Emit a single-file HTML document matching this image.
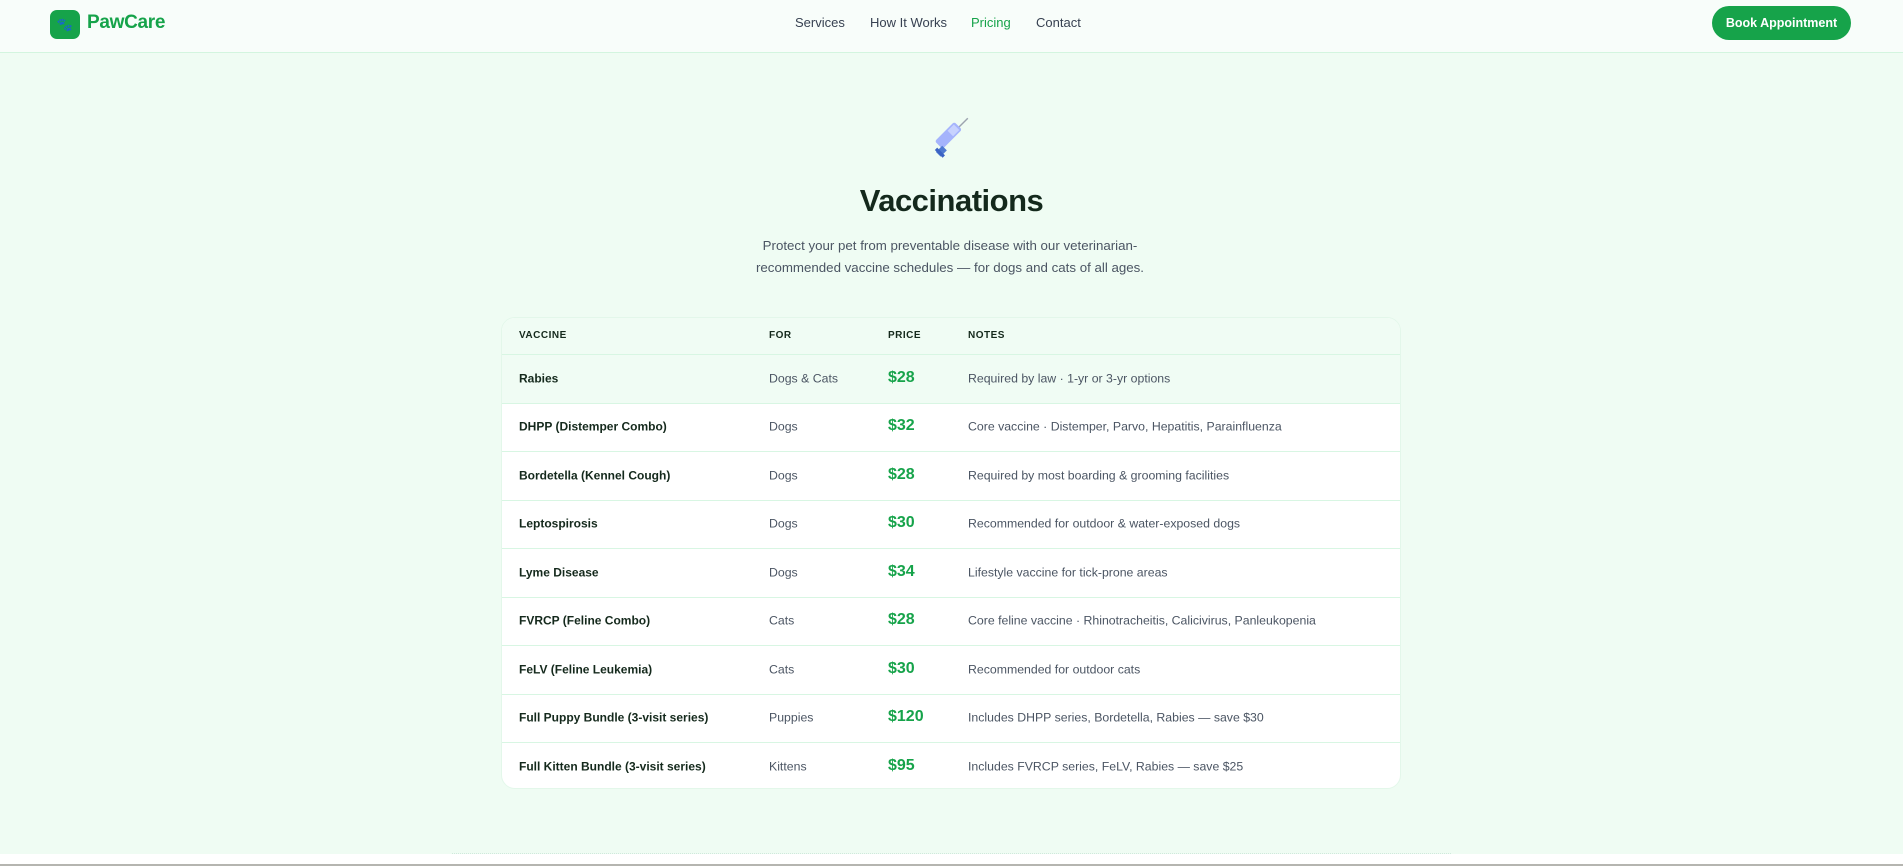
<!DOCTYPE html>
<html><head><meta charset="utf-8"><style>
*{margin:0;padding:0;box-sizing:border-box}
html,body{width:1903px;height:866px;overflow:hidden}
body{background:#fff;font-family:"Liberation Sans",sans-serif;color:#1f2937;position:relative}
.main{position:absolute;left:0;top:0;width:1903px;height:854px;background:#effcf3}
nav{position:absolute;left:0;top:0;width:1903px;height:53px;background:#f8fdfa;border-bottom:1.5px solid #d3f5df}
.logo{position:absolute;left:50px;top:10px;width:30px;height:29px;border-radius:7px;background:#16a34a;color:#374151;font-size:13px;text-align:center;line-height:29px}
.brand{position:absolute;left:87px;top:12px;font-size:19px;font-weight:bold;color:#16a34a;letter-spacing:-0.3px}
.links a{position:absolute;top:15px;font-size:13px;color:#374151;text-decoration:none}
.btn{position:absolute;left:1712px;top:6px;width:139px;height:34px;border-radius:17px;background:#16a34a;color:#fff;font-size:12.5px;font-weight:bold;text-align:center;line-height:34px}
.emoji{position:absolute;left:926px;top:116px;width:44px;height:44px}
h1{position:absolute;left:0;width:1903px;top:183px;text-align:center;font-size:31px;font-weight:bold;color:#14291c;letter-spacing:-0.5px}
.sub{position:absolute;left:740px;width:420px;top:235px;text-align:center;font-size:13.3px;line-height:22px;color:#4b5563}
.tbl{position:absolute;left:501px;top:317px;width:900px;height:472px;background:#fff;border-radius:14px;overflow:hidden;border:1px solid #e3f7ea}
.row{position:absolute;left:0;width:900px;height:48.5px;border-top:1.5px solid #d8f6e3}
.row span{position:absolute;top:50%;transform:translateY(-55%);white-space:nowrap}
.c1{left:17px;font-size:12px;font-weight:bold;color:#14291c}
.c2{left:267px;font-size:12.3px;color:#4b5563}
.c3{left:386px;font-size:16px;font-weight:bold;color:#16a34a}
.c4{left:466px;font-size:12.3px;color:#4b5563}
.hd{top:0;height:36px;border-top:none;background:#f0fcf4}
.hd span{font-size:10px;font-weight:bold;color:#14291c;letter-spacing:0.5px}
.footline{position:absolute;left:0;top:864px;width:1903px;height:2px;background:#b5b5b0}
.dots{position:absolute;left:452px;top:853px;width:999px;border-top:1px dotted #cfe9dc}
</style></head><body>
<div class="main">
<nav>
<div class="logo">🐾</div>
<div class="brand">PawCare</div>
<div class="links">
<a style="left:795px">Services</a>
<a style="left:870px">How It Works</a>
<a style="left:971px;color:#16a34a">Pricing</a>
<a style="left:1036px">Contact</a>
</div>
<div class="btn">Book Appointment</div>
</nav>
<svg class="emoji" viewBox="0 0 40 40">
<line x1="27" y1="13" x2="38" y2="2" stroke="#9ca3af" stroke-width="1.3"/>
<rect x="15" y="5" width="10" height="25" rx="2" fill="#a5b4fc" transform="rotate(45 20 18)"/>
<rect x="16.5" y="7" width="7" height="8" fill="#c7d2fe" transform="rotate(45 20 18)"/>
<rect x="11" y="28" width="6" height="8" fill="#4f7ad1" transform="rotate(45 14 32)"/>
<rect x="8" y="32" width="10" height="3" fill="#3b63c4" transform="rotate(45 13 33)"/>
</svg>
<h1>Vaccinations</h1>
<div class="sub">Protect your pet from preventable disease with our veterinarian-recommended vaccine schedules — for dogs and cats of all ages.</div>
<div class="tbl">
<div class="row hd"><span class="c1">VACCINE</span><span class="c2">FOR</span><span class="c3">PRICE</span><span class="c4">NOTES</span></div>
<div class="row" style="top:36px;background:#f0fcf4"><span class="c1">Rabies</span><span class="c2">Dogs &amp; Cats</span><span class="c3">$28</span><span class="c4">Required by law · 1-yr or 3-yr options</span></div>
<div class="row" style="top:84.5px"><span class="c1">DHPP (Distemper Combo)</span><span class="c2">Dogs</span><span class="c3">$32</span><span class="c4">Core vaccine · Distemper, Parvo, Hepatitis, Parainfluenza</span></div>
<div class="row" style="top:133px"><span class="c1">Bordetella (Kennel Cough)</span><span class="c2">Dogs</span><span class="c3">$28</span><span class="c4">Required by most boarding &amp; grooming facilities</span></div>
<div class="row" style="top:181.5px"><span class="c1">Leptospirosis</span><span class="c2">Dogs</span><span class="c3">$30</span><span class="c4">Recommended for outdoor &amp; water-exposed dogs</span></div>
<div class="row" style="top:230px"><span class="c1">Lyme Disease</span><span class="c2">Dogs</span><span class="c3">$34</span><span class="c4">Lifestyle vaccine for tick-prone areas</span></div>
<div class="row" style="top:278.5px"><span class="c1">FVRCP (Feline Combo)</span><span class="c2">Cats</span><span class="c3">$28</span><span class="c4">Core feline vaccine · Rhinotracheitis, Calicivirus, Panleukopenia</span></div>
<div class="row" style="top:327px"><span class="c1">FeLV (Feline Leukemia)</span><span class="c2">Cats</span><span class="c3">$30</span><span class="c4">Recommended for outdoor cats</span></div>
<div class="row" style="top:375.5px"><span class="c1">Full Puppy Bundle (3-visit series)</span><span class="c2">Puppies</span><span class="c3">$120</span><span class="c4">Includes DHPP series, Bordetella, Rabies — save $30</span></div>
<div class="row" style="top:424px"><span class="c1">Full Kitten Bundle (3-visit series)</span><span class="c2">Kittens</span><span class="c3">$95</span><span class="c4">Includes FVRCP series, FeLV, Rabies — save $25</span></div>
</div>
</div>
<div class="dots"></div>
<div class="footline"></div>
</body></html>
